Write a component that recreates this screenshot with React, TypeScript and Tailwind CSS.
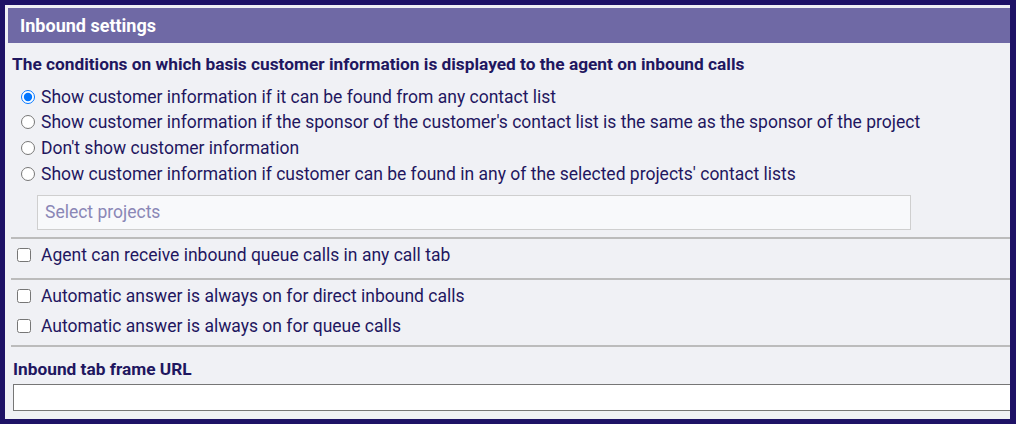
import * as React from "react";

const options = [
  "Show customer information if it can be found from any contact list",
  "Show customer information if the sponsor of the customer's contact list is the same as the sponsor of the project",
  "Don't show customer information",
  "Show customer information if customer can be found in any of the selected projects' contact lists",
];

const Divider = () => <div className="ml-[6px] h-[2px] bg-[#bcbcbc]" />;

export default function App() {
  const [choice, setChoice] = React.useState(0);

  return (
    <div
      className="w-[1016px] h-[424px] bg-[#1e1266] pt-[5px] pl-[5px] pr-[6px] pb-[5px] text-[#1f1760]"
      style={{ fontFamily: "Roboto, 'Liberation Sans', sans-serif" }}
    >
      <div className="h-full bg-[#f0f1f5] overflow-hidden">
        <div className="ml-[3px] mt-[3px] h-[35px] bg-[#6f69a5] pl-[12px] flex items-center text-white font-bold text-[18px]">
          Inbound settings
        </div>

        <div className="mt-[9px] pl-[7px] h-[24px] leading-[24px] font-bold text-[17.3px]">
          The conditions on which basis customer information is displayed to the agent on inbound calls
        </div>

        <div className="mt-[8px] pl-[16px]">
          {options.map((text, i) => (
            <label key={i} className="flex items-center h-[25.67px] gap-[6px] text-[17.5px] cursor-pointer">
              <input
                type="radio"
                name="cond"
                className="m-0 w-[14px] h-[14px] accent-[#0075ff]"
                checked={choice === i}
                onChange={() => setChoice(i)}
              />
              <span>{text}</span>
            </label>
          ))}
        </div>

        <div className="mt-[8px] ml-[32px] w-[874px] h-[35px] border border-[#cfcfcf] bg-[#f8f9fb] flex items-center pl-[7px] text-[17.5px] text-[#8a87b6]">
          Select projects
        </div>

        <div className="mt-[7px]">
          <Divider />
        </div>

        <label className="mt-[3px] pl-[12px] flex items-center h-[26px] gap-[10px] text-[17.5px]">
          <input type="checkbox" className="m-0 w-[14px] h-[14px]" />
          <span>Agent can receive inbound queue calls in any call tab</span>
        </label>

        <div className="mt-[10px]">
          <Divider />
        </div>

        <div className="mt-[3px] pl-[12px] flex flex-col gap-[4px]">
          <label className="flex items-center h-[26px] gap-[10px] text-[17.5px]">
            <input type="checkbox" className="m-0 w-[14px] h-[14px]" />
            <span>Automatic answer is always on for direct inbound calls</span>
          </label>
          <label className="flex items-center h-[26px] gap-[10px] text-[17.5px]">
            <input type="checkbox" className="m-0 w-[14px] h-[14px]" />
            <span>Automatic answer is always on for queue calls</span>
          </label>
        </div>

        <div className="mt-[6px]">
          <Divider />
        </div>

        <div className="mt-[10px] pl-[8px] h-[24px] leading-[24px] font-bold text-[17.3px]">
          Inbound tab frame URL
        </div>

        <input
          type="text"
          className="block mt-[3px] ml-[8px] w-[1010px] h-[27px] border border-[#767676] bg-white outline-none"
        />
      </div>
    </div>
  );
}
